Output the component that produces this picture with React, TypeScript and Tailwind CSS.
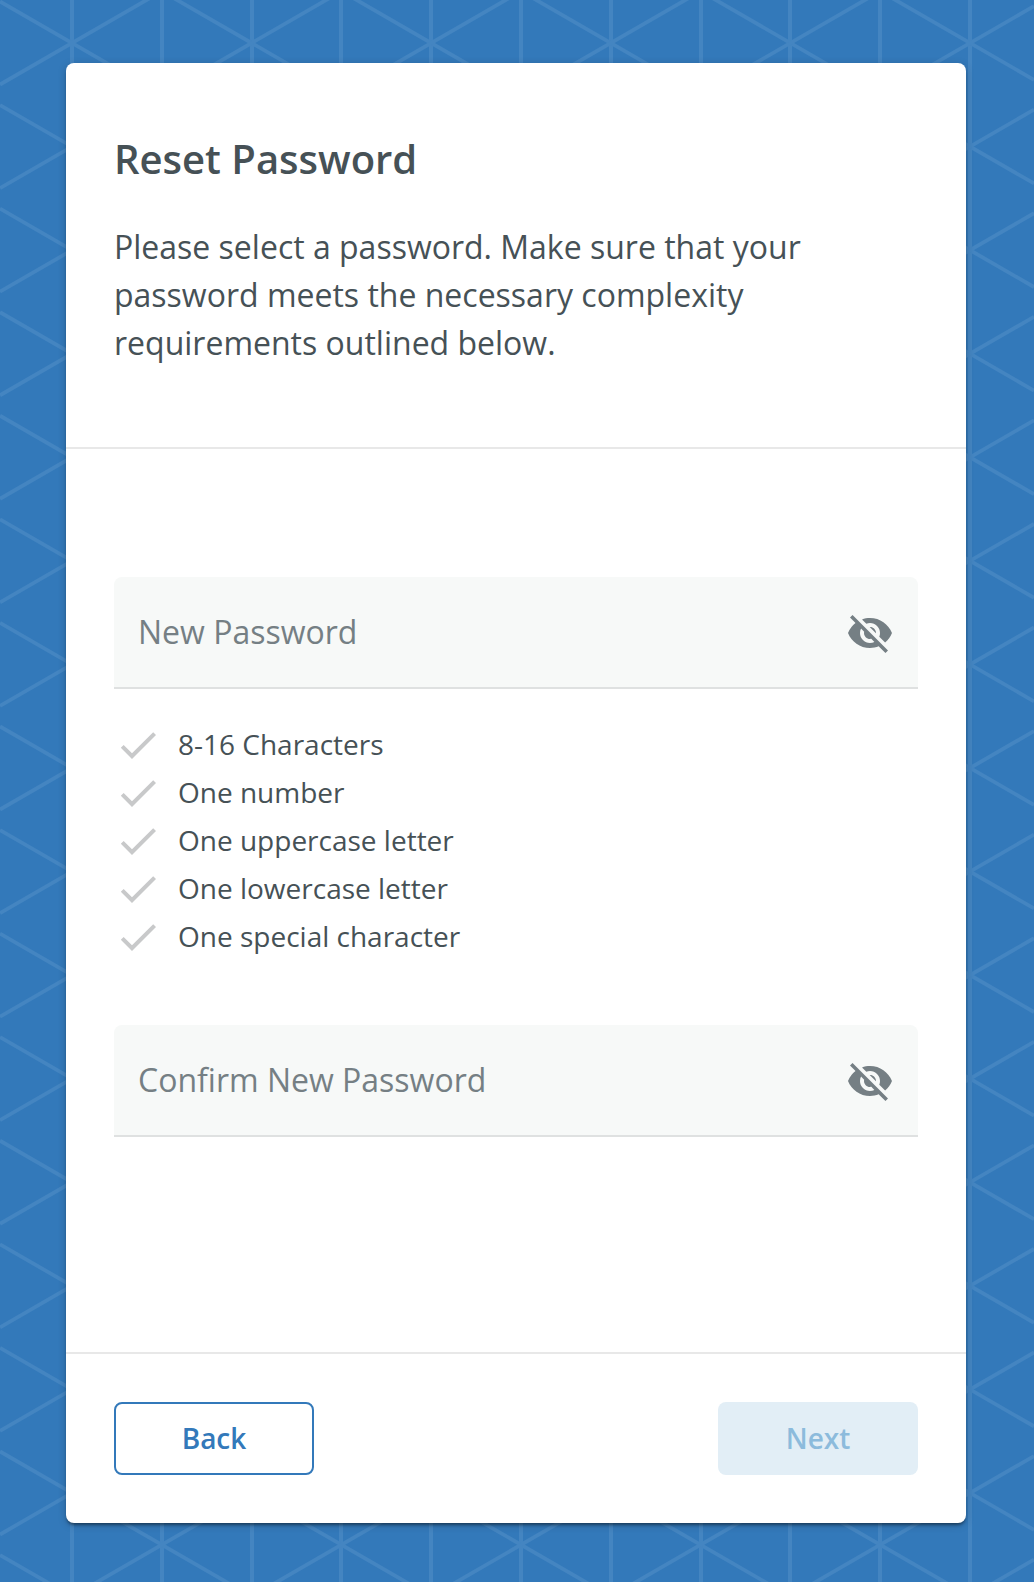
import { MdVisibilityOff } from "react-icons/md";

const requirements = [
  "8-16 Characters",
  "One number",
  "One uppercase letter",
  "One lowercase letter",
  "One special character",
];

const COL = 89.8;
const ROW = 103.57;

// Isometric triangle grid drawn behind the card.
function GridBackground() {
  const columns = Array.from({ length: 12 }, (_, i) => Math.round(72 + (i - 1) * COL));
  const slope = ROW / 2 / COL;
  const diagonals = Array.from({ length: 30 }, (_, i) => 43 + (i - 8) * ROW);
  return (
    <svg className="absolute inset-0" width="1034" height="1582" viewBox="0 0 1034 1582" fill="none" stroke="#4485c1" strokeWidth="3.8">
      {columns.map((x) => (
        <path key={x} strokeWidth="4" d={`M${x} 0V1582`} />
      ))}
      {diagonals.map((y) => (
        <path
          key={y}
          d={`M0 ${y - 72 * slope}L1034 ${y + 962 * slope}M0 ${y + 72 * slope}L1034 ${y - 962 * slope}`}
        />
      ))}
    </svg>
  );
}

function PasswordField({ label }: { label: string }) {
  return (
    <div className="flex h-28 items-center justify-between rounded-t-lg border-b-2 border-[#dfe1e1] bg-[#f7f9f8] px-6">
      <span className="text-[32px] leading-[48px] text-[#757f84]">{label}</span>
      <MdVisibilityOff className="mt-0.5 size-12 text-[#757f84]" />
    </div>
  );
}

export default function App() {
  return (
    <div className="relative h-[1582px] w-[1034px] overflow-hidden bg-[#3379ba] pt-[63px] pl-[66px] font-['Open_Sans',sans-serif]">
      <GridBackground />
      <main className="relative flex h-[1460px] w-[900px] flex-col rounded-lg bg-white text-[#465156] shadow-[0_3px_3px_-1px_rgba(0,0,0,0.4),0_2px_8px_rgba(0,0,0,0.2)]">
        <header className="h-[386px] border-b-2 border-[#e8e8e8] px-12 pt-[66px]">
          <h1 className="text-[40px] leading-[60px] font-semibold">Reset Password</h1>
          <p className="mt-[34px] w-[720px] text-[32px] leading-[48px]">
            Please select a password. Make sure that your password meets the necessary complexity requirements outlined below.
          </p>
        </header>
        <section className="flex-1 px-12 pt-32">
          <PasswordField label="New Password" />
          <ul className="mt-8 mb-16">
            {requirements.map((text) => (
              <li key={text} className="flex h-12 items-center gap-4 text-[28px]">
                <svg className="size-12 text-[#c8c9ca]" viewBox="0 0 24 24" fill="currentColor">
                  <path d="M9 16.17 4.83 12l-1.42 1.41L9 19 21 7l-1.41-1.41z" />
                </svg>
                <span className="pb-0.5 leading-[46px]">{text}</span>
              </li>
            ))}
          </ul>
          <PasswordField label="Confirm New Password" />
        </section>
        <footer className="flex justify-between border-t-2 border-[#e8e8e8] p-12">
          <button className="h-[73px] w-[200px] rounded-lg border-2 border-[#3379ba] pb-px text-[28px] font-semibold text-[#3379ba]">Back</button>
          <button className="h-[73px] w-[200px] rounded-lg bg-[#e2eef6] pb-px text-[28px] font-semibold text-[#8cbbdc]">Next</button>
        </footer>
      </main>
    </div>
  );
}
